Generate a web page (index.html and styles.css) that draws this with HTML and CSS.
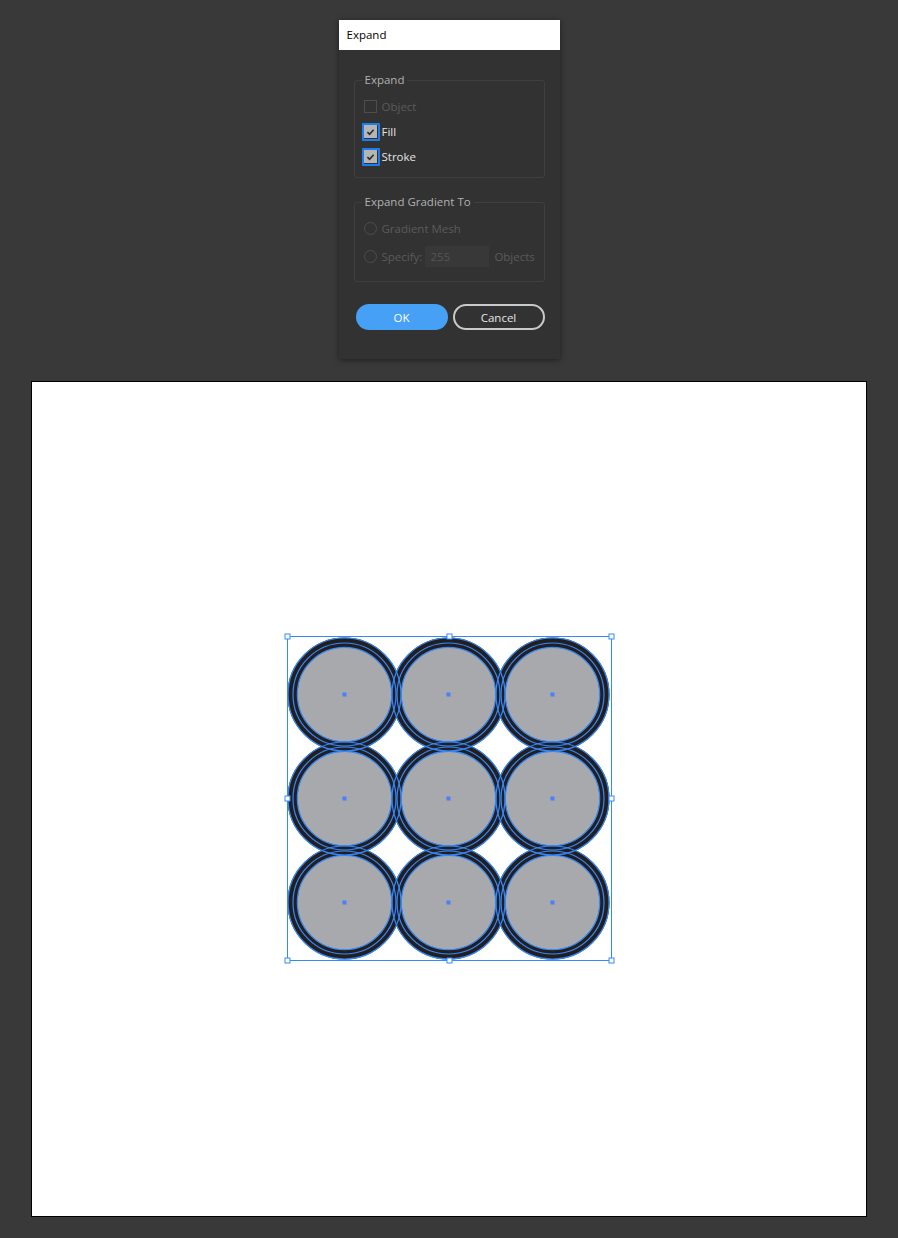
FILE: index.html
```html
<!DOCTYPE html>
<html>
<head>
<meta charset="utf-8">
<link rel="stylesheet" href="styles.css">
</head>
<body>
<div class="page">
  <div class="dialog">
    <div class="titlebar">Expand</div>
    <div class="dbody">
      <fieldset class="group g1">
        <legend>Expand</legend>
        <div class="row disabled">
          <span class="ctl"><span class="box"></span></span><span class="lbl">Object</span>
        </div>
        <div class="row">
          <span class="ctl focus"><span class="box checked"><svg width="12" height="12" viewBox="0 0 12 12"><path d="M2.6 6.1 L5 8.4 L9.4 3.6" fill="none" stroke="#2e2e2e" stroke-width="1.8"/></svg></span></span><span class="lbl">Fill</span>
        </div>
        <div class="row">
          <span class="ctl focus"><span class="box checked"><svg width="12" height="12" viewBox="0 0 12 12"><path d="M2.6 6.1 L5 8.4 L9.4 3.6" fill="none" stroke="#2e2e2e" stroke-width="1.8"/></svg></span></span><span class="lbl">Stroke</span>
        </div>
      </fieldset>
      <fieldset class="group g2">
        <legend>Expand Gradient To</legend>
        <div class="row r1 disabled">
          <span class="ctl"><span class="radio"></span></span><span class="lbl">Gradient Mesh</span>
        </div>
        <div class="row r2 disabled">
          <span class="ctl"><span class="radio"></span></span><span class="lbl">Specify:</span>
          <span class="input">255</span>
          <span class="lbl objs">Objects</span>
        </div>
      </fieldset>
      <div class="buttons">
        <span class="btn ok">OK</span>
        <span class="btn cancel">Cancel</span>
      </div>
    </div>
  </div>

  <div class="artboard">
    <svg class="art" width="336" height="336" viewBox="281 631 336 336">
      <defs>
        <g id="c"><circle r="52" fill="#a7a9ac" stroke="#231f20" stroke-width="10"/></g>
        <g id="o" fill="none" stroke="#338aff" stroke-width="1.2">
          <circle r="56.5"/><circle r="51.5"/><circle r="47.2"/>
        </g>
        <rect id="m" x="-2" y="-2" width="4" height="4" fill="#4b7dff"/>
        <rect id="h" x="-2.5" y="-2.5" width="5" height="5" fill="#fff" stroke="#338aff" stroke-width="1"/>
      </defs>
      <use href="#c" x="344.5" y="694.5"/><use href="#c" x="448.5" y="694.5"/><use href="#c" x="552.5" y="694.5"/>
      <use href="#c" x="344.5" y="798.5"/><use href="#c" x="448.5" y="798.5"/><use href="#c" x="552.5" y="798.5"/>
      <use href="#c" x="344.5" y="902.5"/><use href="#c" x="448.5" y="902.5"/><use href="#c" x="552.5" y="902.5"/>
      <use href="#o" x="344.5" y="694.5"/><use href="#o" x="448.5" y="694.5"/><use href="#o" x="552.5" y="694.5"/>
      <use href="#o" x="344.5" y="798.5"/><use href="#o" x="448.5" y="798.5"/><use href="#o" x="552.5" y="798.5"/>
      <use href="#o" x="344.5" y="902.5"/><use href="#o" x="448.5" y="902.5"/><use href="#o" x="552.5" y="902.5"/>
      <use href="#m" x="344.5" y="694.5"/><use href="#m" x="448.5" y="694.5"/><use href="#m" x="552.5" y="694.5"/>
      <use href="#m" x="344.5" y="798.5"/><use href="#m" x="448.5" y="798.5"/><use href="#m" x="552.5" y="798.5"/>
      <use href="#m" x="344.5" y="902.5"/><use href="#m" x="448.5" y="902.5"/><use href="#m" x="552.5" y="902.5"/>
      <rect x="287.5" y="636.5" width="324" height="324" fill="none" stroke="#338aff" stroke-width="1"/>
      <use href="#h" x="287.5" y="636.5"/><use href="#h" x="449.5" y="636.5"/><use href="#h" x="611.5" y="636.5"/>
      <use href="#h" x="287.5" y="798.5"/><use href="#h" x="611.5" y="798.5"/>
      <use href="#h" x="287.5" y="960.5"/><use href="#h" x="449.5" y="960.5"/><use href="#h" x="611.5" y="960.5"/>
    </svg>
  </div>
</div>
</body>
</html>
```

FILE: styles.css
```css
html, body {
  margin: 0;
  padding: 0;
  background: #393939;
}
body {
  font-family: "Open Sans", "Noto Sans", sans-serif;
  font-size: 11px;
}
.page {
  display: flex;
  flex-direction: column;
  align-items: center;
  padding-top: 20px;
  padding-bottom: 20px;
}
.dialog {
  width: 221px;
  background: #323232;
  box-shadow: 0 1px 6px rgba(0, 0, 0, 0.45);
  display: flex;
  flex-direction: column;
}
.titlebar {
  height: 30px;
  background: #ffffff;
  color: #000;
  font-size: 11.5px;
  line-height: 30px;
  padding-left: 8px;
}
.dbody {
  padding: 23px 15px 29px 15px;
  display: flex;
  flex-direction: column;
}
.group {
  margin: 0;
  min-width: 0;
  border: 1px solid #3f3f3f;
  border-radius: 3px;
  padding: 7px 6px 8px 7px;
}
.group legend {
  padding: 0 3px;
  margin-left: 0;
  color: #b1b1b1;
  font-size: 11.5px;
  line-height: 14px;
}
.g2 {
  margin-top: 17px;
  padding-top: 6px;
  padding-bottom: 11px;
}
.row {
  display: flex;
  align-items: center;
  height: 25px;
  color: #e3e3e3;
  font-size: 11.5px;
}
.row.r1 { height: 27px; }
.row.r2 { height: 28px; }
.row.disabled { color: #5b5b5b; }
.ctl {
  width: 18px;
  height: 18px;
  box-sizing: border-box;
  border: 2px solid transparent;
  display: flex;
  align-items: center;
  justify-content: center;
  margin-right: 2px;
  border-radius: 1px;
}
.ctl.focus { border-color: #1b7ef0; }
.box {
  width: 13px;
  height: 13px;
  box-sizing: border-box;
  border: 1px solid #4d4d4d;
  display: flex;
  align-items: center;
  justify-content: center;
}
.box.checked {
  background: #b5b5b5;
  border-color: #b5b5b5;
}
.box svg { display: block; }
.radio {
  width: 13px;
  height: 13px;
  box-sizing: border-box;
  border: 1px solid #4d4d4d;
  border-radius: 50%;
}
.input {
  width: 64px;
  height: 21px;
  box-sizing: border-box;
  background: #383838;
  margin-left: 3px;
  padding-left: 5px;
  line-height: 21px;
  color: #555;
}
.objs { margin-left: 5px; }
.buttons {
  margin-top: 22px;
  display: flex;
  justify-content: flex-end;
  gap: 5px;
}
.btn {
  width: 92px;
  height: 26px;
  box-sizing: border-box;
  border-radius: 13px;
  display: flex;
  align-items: center;
  justify-content: center;
  font-size: 11.5px;
}
.ok {
  background: #46a0f6;
  color: #fff;
}
.cancel {
  border: 2px solid #c9c9c9;
  color: #e6e6e6;
}
.artboard {
  margin-top: 22px;
  width: 836px;
  height: 836px;
  box-sizing: border-box;
  background: #fff;
  border: 1px solid #000;
  display: flex;
  align-items: center;
  justify-content: center;
}
.art { display: block; }
```
